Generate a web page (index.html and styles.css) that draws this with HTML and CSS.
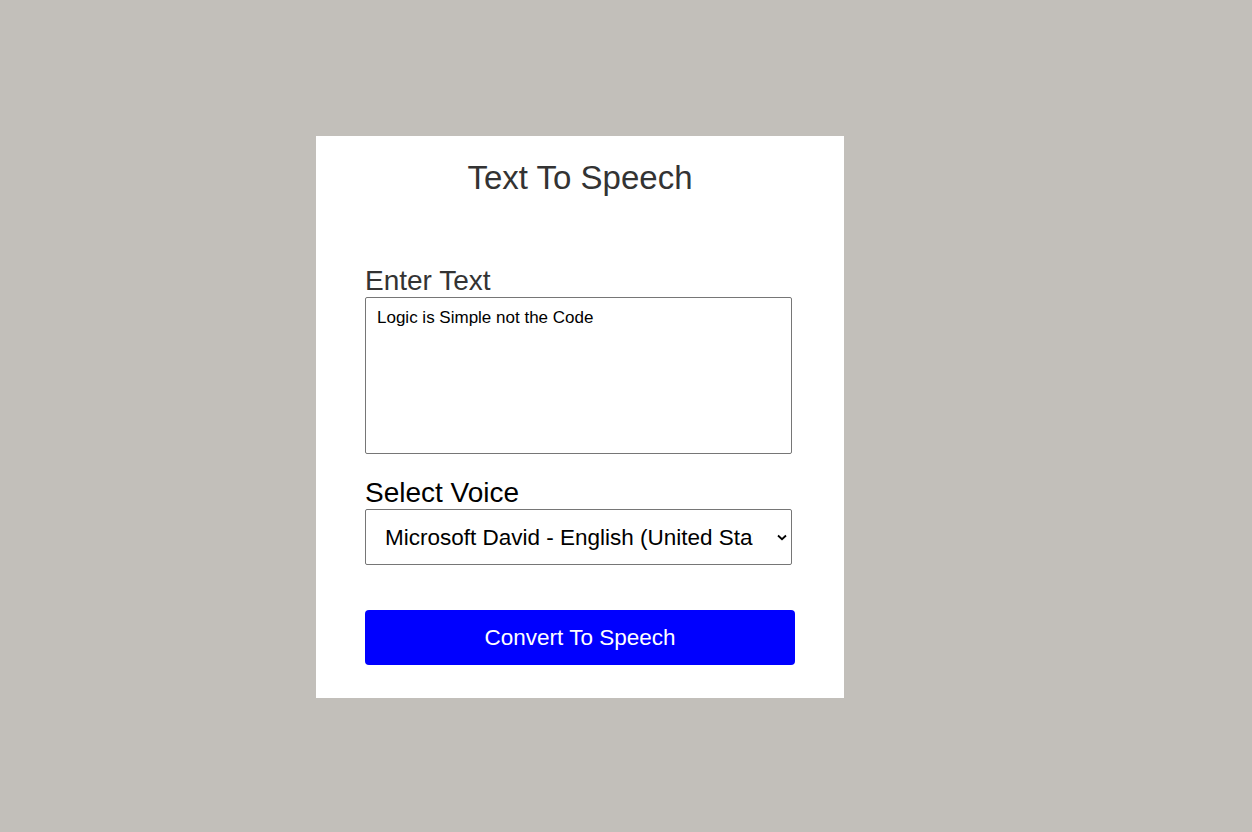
FILE: index.html
```html
<!DOCTYPE html>
<html lang="en">
<head>
<meta charset="utf-8">
<title>Text To Speech</title>
<link rel="stylesheet" href="styles.css">
</head>
<body>
<main class="card">
  <h1 class="title">Text To Speech</h1>
  <label class="label label-text" for="text">Enter Text</label>
  <textarea id="text" class="textarea">Logic is Simple not the Code</textarea>
  <label class="label label-voice" for="voice">Select Voice</label>
  <select id="voice" class="select">
    <option>Microsoft David - English (United States)</option>
    <option>Microsoft Zira - English (United States)</option>
  </select>
  <button class="btn" type="button">Convert To Speech</button>
</main>
</body>
</html>
```

FILE: styles.css
```css
* { box-sizing: border-box; }
html, body { margin: 0; }
body {
  background: #c2bfba;
  font-family: "Liberation Sans", Arial, sans-serif;
  padding: 136px 0 0 316px;
  min-height: 832px;
}
.card {
  width: 528px;
  background: #fff;
  padding: 23px 49px 33px;
  display: flex;
  flex-direction: column;
  align-items: flex-start;
}
.title {
  align-self: stretch;
  margin: 0;
  font-size: 33px;
  font-weight: normal;
  line-height: 38px;
  color: #333;
  text-align: center;
}
.label {
  display: block;
  font-size: 28px;
  line-height: 32px;
}
.label-text {
  margin-top: 68px;
  color: #333;
}
.label-voice {
  margin-top: 23px;
  color: #000;
}
.textarea {
  margin-top: 0;
  width: 427px;
  height: 157px;
  padding: 10px 11px;
  border: 1px solid #767676;
  border-radius: 2px;
  font-family: "Liberation Sans", Arial, sans-serif;
  font-size: 17px;
  line-height: 20px;
  color: #000;
  resize: none;
  display: block;
}
.select {
  margin-top: 0;
  width: 427px;
  height: 56px;
  padding: 0 38px 0 19px;
  border: 1px solid #767676;
  border-radius: 2px;
  -webkit-appearance: none;
  appearance: none;
  background: #fff url("data:image/svg+xml,%3Csvg xmlns='http://www.w3.org/2000/svg' width='10' height='7' viewBox='0 0 10 7'%3E%3Cpath d='M1 1.5 L5 5.2 L9 1.5' fill='none' stroke='%23000' stroke-width='1.8'/%3E%3C/svg%3E") no-repeat right 4px center;
  font-family: "Liberation Sans", Arial, sans-serif;
  font-size: 22.5px;
  color: #000;
}
.btn {
  margin-top: 45px;
  width: 430px;
  height: 55px;
  border: none;
  border-radius: 4px;
  background: #0000ff;
  color: #fff;
  font-family: "Liberation Sans", Arial, sans-serif;
  font-size: 22.5px;
  cursor: pointer;
}
```
